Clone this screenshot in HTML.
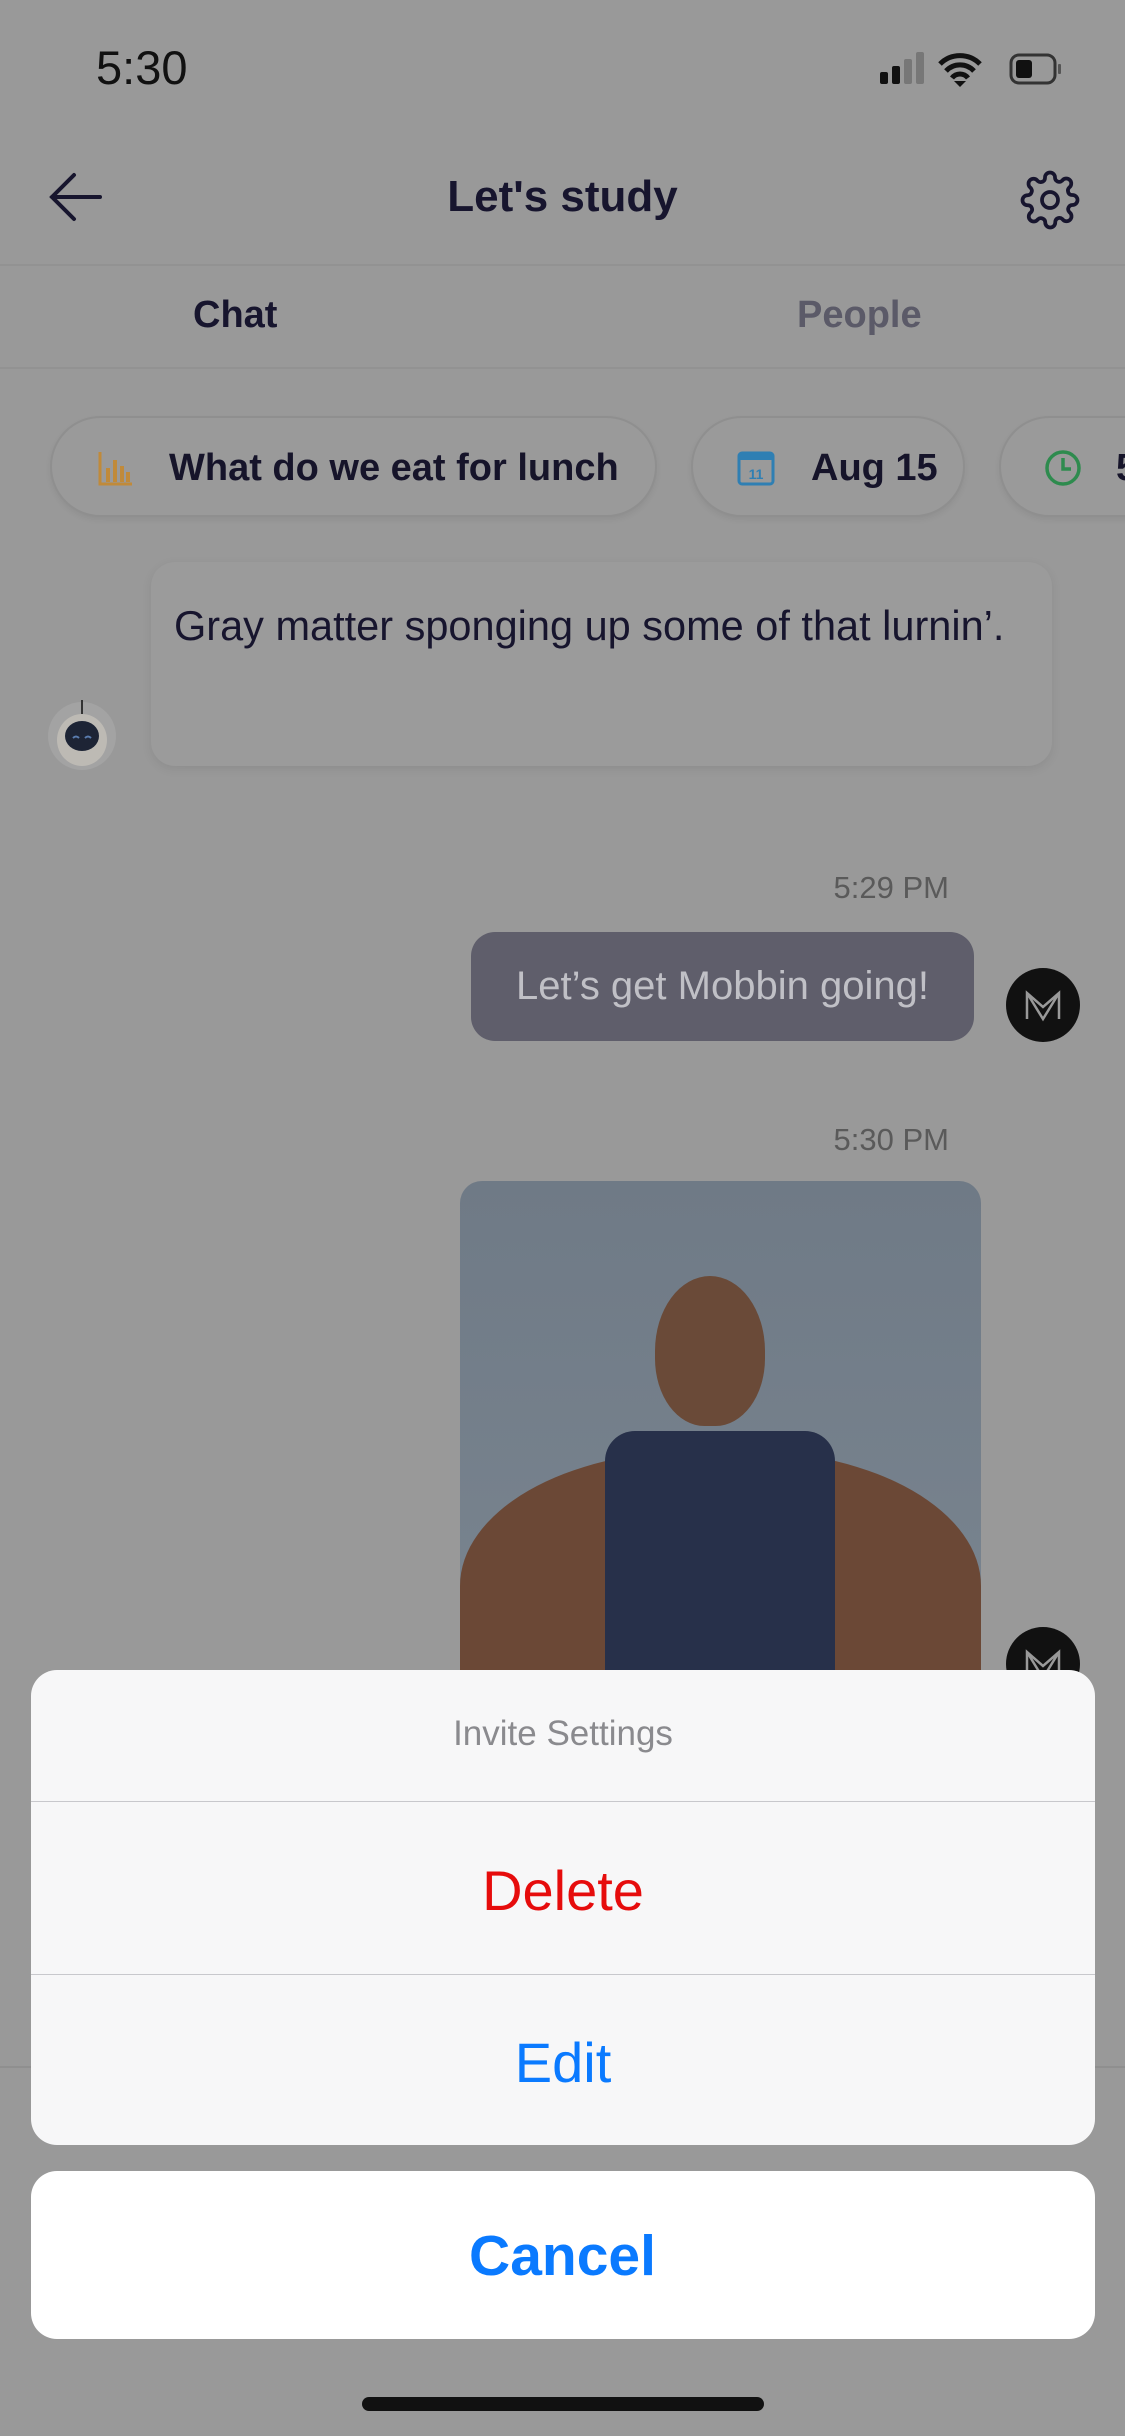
<!DOCTYPE html>
<html><head><meta charset="utf-8"><style>
*{margin:0;padding:0;box-sizing:border-box}
body{width:1125px;height:2436px;background:#999;position:relative;overflow:hidden;font-family:"Liberation Sans",sans-serif}
.a{position:absolute}
.chip{position:absolute;top:416px;height:101px;border:2px solid #8f8f8f;border-radius:51px;background:#9a9a9a;box-shadow:0 3px 6px rgba(0,0,0,.06)}
.ct{position:absolute;top:29px;font-size:38px;font-weight:bold;color:#16142a;white-space:nowrap}
</style></head><body>
<div class="a" style="left:96px;top:40px;font-size:47px;color:#111">5:30</div>
<svg class="a" style="left:878px;top:50px" width="200" height="40">
<rect x="2" y="22" width="8" height="12" rx="2" fill="#111"/><rect x="14" y="16" width="8" height="18" rx="2" fill="#111"/><rect x="26" y="9" width="8" height="25" rx="2" fill="#777"/><rect x="38" y="2" width="8" height="32" rx="2" fill="#777"/>
<path d="M62 14a28 28 0 0 1 40 0M68 21a19 19 0 0 1 28 0M74 28a10 10 0 0 1 16 0" stroke="#111" stroke-width="5" fill="none"/><path d="M76 31l6 6 6-6z" fill="#111"/>
<rect x="133" y="5" width="44" height="28" rx="8" stroke="#333" stroke-width="3" fill="none"/><rect x="138" y="10" width="16" height="18" rx="3" fill="#111"/><rect x="180" y="14" width="3" height="10" rx="1" fill="#555"/>
</svg>
<svg class="a" style="left:46px;top:170px" width="60" height="60"><path d="M54 27H6M28 5L6 27l22 22" stroke="#17152e" stroke-width="4" fill="none" stroke-linecap="round"/></svg>
<div class="a" style="left:0;width:1125px;top:172px;text-align:center;font-size:44px;font-weight:bold;color:#17152e">Let's study</div>
<svg class="a" style="left:1020px;top:170px" width="60" height="60" viewBox="0 0 24 24"><circle cx="12" cy="12" r="3.2" stroke="#17152e" stroke-width="1.5" fill="none"/><path d="M19.4 15a1.7 1.7 0 0 0 .3 1.8l.1.1a2 2 0 1 1-2.8 2.8l-.1-.1a1.7 1.7 0 0 0-1.8-.3 1.7 1.7 0 0 0-1 1.5V21a2 2 0 0 1-4 0v-.1a1.7 1.7 0 0 0-1.1-1.5 1.7 1.7 0 0 0-1.8.3l-.1.1a2 2 0 1 1-2.8-2.8l.1-.1a1.7 1.7 0 0 0 .3-1.8 1.7 1.7 0 0 0-1.5-1H3a2 2 0 0 1 0-4h.1a1.7 1.7 0 0 0 1.5-1.1 1.7 1.7 0 0 0-.3-1.8l-.1-.1a2 2 0 1 1 2.8-2.8l.1.1a1.7 1.7 0 0 0 1.8.3H9a1.7 1.7 0 0 0 1-1.5V3a2 2 0 0 1 4 0v.1a1.7 1.7 0 0 0 1 1.5 1.7 1.7 0 0 0 1.8-.3l.1-.1a2 2 0 1 1 2.8 2.8l-.1.1a1.7 1.7 0 0 0-.3 1.8V9a1.7 1.7 0 0 0 1.5 1H21a2 2 0 0 1 0 4h-.1a1.7 1.7 0 0 0-1.5 1z" stroke="#17152e" stroke-width="1.5" fill="none"/></svg>
<div class="a" style="left:0;top:264px;width:1125px;height:2px;background:#929292"></div>
<div class="a" style="left:0;top:367px;width:1125px;height:2px;background:#929292"></div>
<div class="a" style="left:193px;top:294px;font-size:38px;font-weight:bold;color:#17152e">Chat</div>
<div class="a" style="left:797px;top:294px;font-size:38px;font-weight:bold;color:#5b5a68">People</div>
<div class="chip" style="left:50px;width:607px"><svg class="a" style="left:45px;top:32px" width="36" height="36"><path d="M3 2v32h32" stroke="#c08a3a" stroke-width="3" fill="none"/><path d="M11 18v14M18 10v22M25 16v16M31 22v10" stroke="#c08a3a" stroke-width="4"/></svg><div class="ct" style="left:117px">What do we eat for lunch</div></div>
<div class="chip" style="left:691px;width:274px"><svg class="a" style="left:44px;top:32px" width="38" height="36"><rect x="2" y="3" width="34" height="31" rx="3" stroke="#2f7fb3" stroke-width="3" fill="none"/><rect x="2" y="3" width="34" height="7" fill="#2f7fb3"/><text x="19" y="29" font-size="14" font-weight="bold" fill="#2f7fb3" text-anchor="middle" font-family="Liberation Sans">11</text></svg><div class="ct" style="left:118px">Aug 15</div></div>
<div class="chip" style="left:999px;width:200px"><svg class="a" style="left:42px;top:30px" width="40" height="40"><circle cx="20" cy="20" r="16" stroke="#2e8b4e" stroke-width="3.5" fill="none"/><path d="M20 10v11h8" stroke="#2e8b4e" stroke-width="3.5" fill="none"/></svg><div class="ct" style="left:115px">5</div></div>
<div class="a" style="left:151px;top:562px;width:901px;height:204px;background:#9b9b9b;border-radius:24px;box-shadow:0 3px 10px rgba(0,0,0,.08)"></div>
<div class="a" style="left:174px;top:602px;font-size:41.5px;color:#17152e;white-space:nowrap">Gray matter sponging up some of that lurnin’.</div>
<svg class="a" style="left:44px;top:688px" width="80" height="82"><ellipse cx="38" cy="48" rx="34" ry="34" fill="#a3a3a3"/><line x1="38" y1="12" x2="38" y2="26" stroke="#333" stroke-width="2"/><ellipse cx="38" cy="52" rx="25" ry="26" fill="#bdbab4"/><ellipse cx="38" cy="48" rx="17" ry="15" fill="#1d2435"/><path d="M29 50q3-3 6 0M41 50q3-3 6 0" stroke="#5a7cae" stroke-width="2" fill="none"/></svg>
<div class="a" style="right:176px;top:870px;font-size:31px;color:#5a5a5a">5:29 PM</div>
<div class="a" style="left:471px;top:932px;width:503px;height:109px;background:#5f5e6b;border-radius:24px"></div>
<div class="a" style="left:471px;width:503px;top:964px;text-align:center;font-size:40px;color:#c0c0c6;white-space:nowrap">Let’s get Mobbin going!</div>
<svg class="a" style="left:1005px;top:967px" width="76" height="76"><circle cx="38" cy="38" r="37" fill="#111"/><path d="M22 52V26l16 14 16-14v26M22 26l16 26 16-26" stroke="#999" stroke-width="2.5" fill="none"/></svg>
<div class="a" style="right:176px;top:1122px;font-size:31px;color:#5a5a5a">5:30 PM</div>
<div class="a" style="left:460px;top:1181px;width:521px;height:520px;background:linear-gradient(#6f7a86,#7a8590);border-radius:22px;overflow:hidden">
<div class="a" style="left:195px;top:95px;width:110px;height:150px;background:#6a4a38;border-radius:50% 50% 45% 45%"></div>
<div class="a" style="left:0;top:270px;width:521px;height:300px;background:#6b4836;border-radius:45% 45% 0 0"></div>
<div class="a" style="left:145px;top:250px;width:230px;height:300px;background:#27304a;border-radius:30px 30px 0 0"></div>
</div>
<svg class="a" style="left:1005px;top:1626px" width="76" height="76"><circle cx="38" cy="38" r="37" fill="#111"/><path d="M22 52V26l16 14 16-14v26M22 26l16 26 16-26" stroke="#999" stroke-width="2.5" fill="none"/></svg>
<div class="a" style="left:0;top:2066px;width:1125px;height:2px;background:#8f8f8f"></div>
<div class="a" style="left:31px;top:1670px;width:1064px;height:475px;background:#f7f7f8;border-radius:26px;overflow:hidden">
<div class="a" style="left:0;width:100%;top:44px;text-align:center;font-size:35px;color:#8a8a8e">Invite Settings</div>
<div class="a" style="left:0;top:131px;width:100%;height:1px;background:#c8c8cc"></div>
<div class="a" style="left:0;width:100%;top:188px;text-align:center;font-size:56px;color:#e60c0c">Delete</div>
<div class="a" style="left:0;top:304px;width:100%;height:1px;background:#c8c8cc"></div>
<div class="a" style="left:0;width:100%;top:360px;text-align:center;font-size:56px;color:#0a7aff">Edit</div>
</div>
<div class="a" style="left:31px;top:2171px;width:1064px;height:168px;background:#fff;border-radius:26px"></div>
<div class="a" style="left:0;width:1125px;top:2223px;text-align:center;font-size:57px;font-weight:bold;color:#0a7aff">Cancel</div>
<div class="a" style="left:362px;top:2397px;width:402px;height:14px;border-radius:7px;background:#111"></div>
</body></html>
